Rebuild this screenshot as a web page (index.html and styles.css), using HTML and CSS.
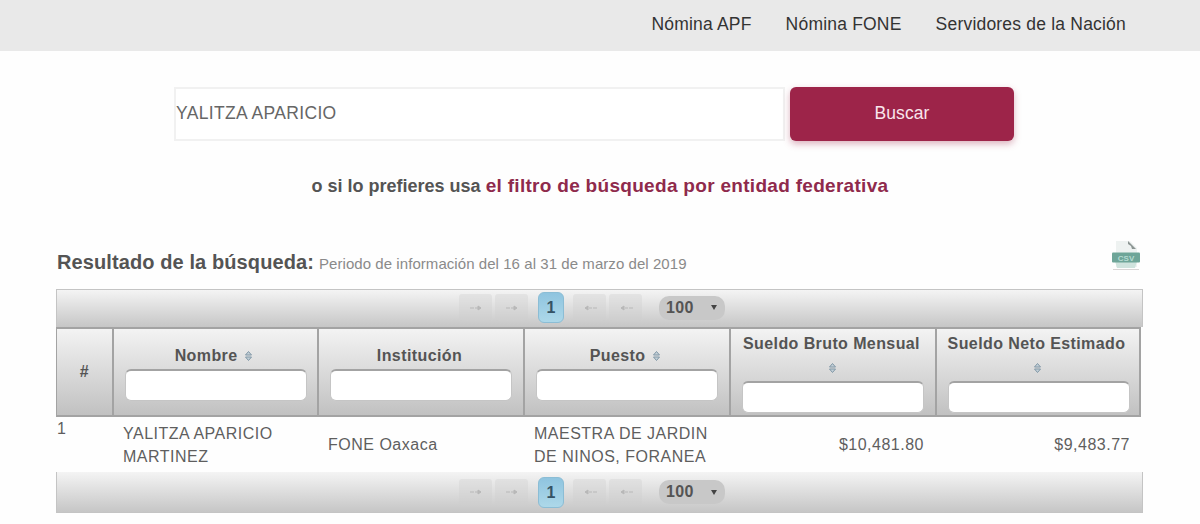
FILE: index.html
```
<!doctype html>
<html lang="es">
  <head>
    <meta charset="UTF-8" />
    <meta name="viewport" content="width=device-width, initial-scale=1.0" />
    <title>Nómina Transparente</title>
    <link rel="stylesheet" href="styles.css">
  </head>
  <body>
    <nav class="topbar">
      <a href="#">Nómina APF</a>
      <a href="#">Nómina FONE</a>
      <a href="#">Servidores de la Nación</a>
    </nav>

    <form class="search">
      <input type="text" class="search-input" value="YALITZA APARICIO" />
      <button type="button" class="search-btn">Buscar</button>
    </form>

    <p class="hint"><span>o si lo prefieres usa</span> <a href="#">el filtro de búsqueda por entidad federativa</a></p>

    <main class="results">
      <div class="results-head">
        <h2>Resultado de la búsqueda:</h2>
        <small>Periodo de información del 16 al 31 de marzo del 2019</small>
        <a href="#" class="csv" title="CSV">
          <svg viewBox="0 0 30 30" width="30" height="30">
            <path d="M5 1h14l7 7v19H5z" fill="#eef2f1" />
            <path d="M17 1l8 8h-4l-1-3-3-2z" fill="#8b9492" />
            <path d="M4 21h22l-2 7H6z" fill="#cfe3dd" />
            <rect x="1" y="12.500" width="28" height="10" rx="1" fill="#6ea598" />
            <text x="15" y="20.500" text-anchor="middle">CSV</text>
            <path d="M2 29.500h26" stroke="#d9d5d5" />
          </svg>
        </a>
      </div>

      <div class="paginator paginator-top">
        <span class="page-nav"><svg viewBox="0 0 14 6"><path d="M1 3h4M6 3h3M9 1l3 2-3 2z" /></svg></span>
        <span class="page-nav"><svg viewBox="0 0 14 6"><path d="M1 3h4M6 3h3M9 1l3 2-3 2z" /></svg></span>
        <span class="page-current">1</span>
        <span class="page-nav"><svg viewBox="0 0 14 6"><path d="M5 1L2 3l3 2zM6 3h3M10 3h4" /></svg></span>
        <span class="page-nav"><svg viewBox="0 0 14 6"><path d="M5 1L2 3l3 2zM6 3h3M10 3h4" /></svg></span>
        <span class="page-size">100 <i></i></span>
      </div>

      <table class="grid">
        <thead>
          <tr>
            <th class="col-num">#</th>
            <th class="col-name">
              <div class="title">Nombre <svg class="sort" viewBox="0 0 9 12"><path d="M1.500 5l3-3.500 3 3.500zM1.500 7l3 3.500 3-3.500z" /></svg></div>
              <input type="text" />
            </th>
            <th>
              <div class="title">Institución</div>
              <input type="text" />
            </th>
            <th>
              <div class="title">Puesto <svg class="sort" viewBox="0 0 9 12"><path d="M1.500 5l3-3.500 3 3.500zM1.500 7l3 3.500 3-3.500z" /></svg></div>
              <input type="text" />
            </th>
            <th>
              <div class="title">Sueldo Bruto Mensual <svg class="sort" viewBox="0 0 9 12"><path d="M1.500 5l3-3.500 3 3.500zM1.500 7l3 3.500 3-3.500z" /></svg></div>
              <input type="text" />
            </th>
            <th>
              <div class="title">Sueldo Neto Estimado <svg class="sort" viewBox="0 0 9 12"><path d="M1.500 5l3-3.500 3 3.500zM1.500 7l3 3.500 3-3.500z" /></svg></div>
              <input type="text" />
            </th>
          </tr>
        </thead>
        <tbody>
          <tr>
            <td class="num">1</td>
            <td>YALITZA APARICIO MARTINEZ</td>
            <td>FONE Oaxaca</td>
            <td>MAESTRA DE JARDIN DE NINOS, FORANEA</td>
            <td class="money">$10,481.80</td>
            <td class="money">$9,483.77</td>
          </tr>
        </tbody>
      </table>

      <div class="paginator paginator-bottom">
        <span class="page-nav"><svg viewBox="0 0 14 6"><path d="M1 3h4M6 3h3M9 1l3 2-3 2z" /></svg></span>
        <span class="page-nav"><svg viewBox="0 0 14 6"><path d="M1 3h4M6 3h3M9 1l3 2-3 2z" /></svg></span>
        <span class="page-current">1</span>
        <span class="page-nav"><svg viewBox="0 0 14 6"><path d="M5 1L2 3l3 2zM6 3h3M10 3h4" /></svg></span>
        <span class="page-nav"><svg viewBox="0 0 14 6"><path d="M5 1L2 3l3 2zM6 3h3M10 3h4" /></svg></span>
        <span class="page-size">100 <i></i></span>
      </div>
    </main>
  </body>
</html>
```
FILE: styles.css
```
:root {
  --guinda: #9d2449;
  --text: #545454;
  --line: #a3a3a3;
}

* {
  margin: 0;
  padding: 0;
  box-sizing: border-box;
}

body {
  font-family: "Liberation Sans", Arial, sans-serif;
  color: var(--text);
  background: #fefefe;
  height: 524px;
  overflow: hidden;
}

a {
  color: inherit;
  text-decoration: none;
}

.topbar {
  height: 51px;
  padding: 0 74px 3px 0;
  background: #e9e9e9;
  display: flex;
  justify-content: flex-end;
  align-items: center;
  gap: 34px;
  font-size: 17.5px;
  letter-spacing: 0.2px;
  color: #333;
  white-space: nowrap;
}

.search {
  display: flex;
  gap: 5px;
  width: 840px;
  margin: 36px 0 0 174px;
}

.search-input {
  width: 611px;
  height: 54px;
  border: 2px solid #f1f1f1;
  font: 17.5px "Liberation Sans", Arial, sans-serif;
  letter-spacing: 0.35px;
  color: #666;
  outline: none;
  padding-bottom: 2px;
}

.search-btn {
  width: 224px;
  height: 54px;
  padding-bottom: 2px;
  border: none;
  border-radius: 6px;
  background: var(--guinda);
  color: #f9e6ec;
  font: 17.5px "Liberation Sans", Arial, sans-serif;
  letter-spacing: 0.1px;
  box-shadow: 0 3px 7px rgba(157, 36, 73, 0.35);
}

.hint {
  margin-top: 34px;
  height: 22px;
  line-height: 22px;
  text-align: center;
  font-size: 18px;
  font-weight: bold;
  white-space: nowrap;
}

.hint a {
  font-size: 19px;
  letter-spacing: 0.3px;
  color: #8f2a4c;
}

.results {
  width: 1087px;
  margin: 42px 0 0 56px;
}

.results-head {
  display: flex;
  align-items: baseline;
  height: 50px;
  padding-left: 1px;
  white-space: nowrap;
}

.results-head h2 {
  font-size: 20px;
  line-height: 47px;
  letter-spacing: 0.1px;
  margin-right: 5px;
}

.results-head small {
  font-size: 15px;
  letter-spacing: 0.06px;
  color: #8a8a8a;
}

.csv {
  align-self: flex-start;
  margin: 1px 2px 0 auto;
}

.csv svg {
  display: block;
}

.csv text {
  font-size: 8px;
  font-weight: bold;
  fill: #b5dbd2;
}

.paginator {
  display: flex;
  align-items: center;
  height: 38px;
  padding-left: 402px;
  border: 1px solid #c4c4c4;
  background: linear-gradient(#f4f4f4, #c6c6c6);
}

.paginator-top {
  padding-bottom: 2px;
  border-bottom: none;
}

.paginator-bottom {
  height: 41px;
  border-top: none;
}

.page-nav {
  width: 33px;
  height: 27px;
  margin-right: 3px;
  border-radius: 3px;
  background: rgba(205, 205, 205, 0.35);
  display: flex;
  align-items: center;
  justify-content: center;
}

.page-nav svg {
  width: 14px;
  height: 6px;
  fill: #b8b8b8;
  stroke: #b8b8b8;
  stroke-width: 1;
}

.page-current {
  width: 26px;
  height: 31px;
  margin: 0 9px 0 7px;
  border: 1px solid #8bbdd5;
  border-radius: 6px;
  background: linear-gradient(#8fc4df, #add8e9);
  color: #355365;
  font-size: 16px;
  font-weight: bold;
  line-height: 29px;
  text-align: center;
}

.page-size {
  width: 66px;
  height: 24px;
  margin-left: 14px;
  padding: 0 8px 0 7px;
  border-radius: 10px;
  background: #c8c8c8;
  font-size: 16px;
  font-weight: bold;
  letter-spacing: 0.3px;
  display: flex;
  align-items: center;
  justify-content: space-between;
}

.page-size i {
  border: 3px solid transparent;
  border-top: 5px solid #444;
  border-bottom: none;
}

.grid {
  width: 1085px;
  table-layout: fixed;
  border-collapse: separate;
  border-spacing: 0;
}

.grid th {
  height: 90px;
  padding: 1px 10px 1px 11px;
  border: solid var(--line);
  border-width: 2px 0 2px 2px;
  background: linear-gradient(#f3f3f3, #c1c1c1);
  font-size: 16px;
  letter-spacing: 0.4px;
  line-height: 24px;
  vertical-align: middle;
}

.grid th:first-child {
  border-left-width: 1px;
}

.grid th:last-child {
  border-right-width: 2px;
}

.grid .col-num {
  width: 56px;
  padding: 0;
}

.grid .col-name {
  width: 205px;
}

.title {
  margin: 0 0 0 -4px;
}

.sort {
  width: 9px;
  height: 12px;
  margin-left: 2px;
  vertical-align: -1px;
  fill: #c3d0d8;
  stroke: #8097a6;
  stroke-width: 1;
}

.grid input {
  display: block;
  width: 182px;
  height: 32px;
  margin-top: 1px;
  border: 1px solid #c5c5c5;
  border-top: 2px solid var(--line);
  border-radius: 6px;
  background: #fff;
}

.grid td {
  height: 55px;
  padding: 0 11px;
  font-size: 16px;
  letter-spacing: 0.5px;
  line-height: 23px;
  color: #5e5e5e;
}

.grid .num {
  padding: 0 1px;
  vertical-align: top;
}

.grid .money {
  text-align: right;
}
```
